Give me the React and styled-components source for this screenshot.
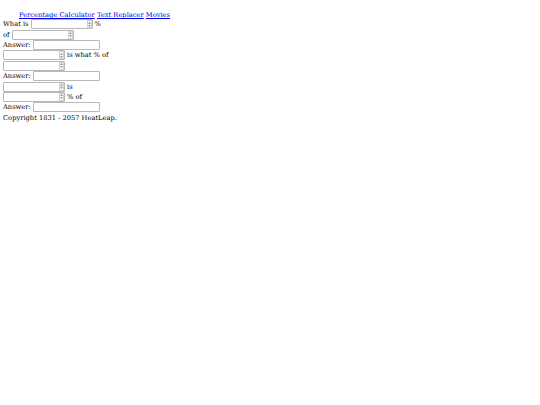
import React from 'react'
import styled, { createGlobalStyle } from 'styled-components'

const GlobalStyle = createGlobalStyle`
  body {
    margin: 5px 3px;
    font-family: "DejaVu Serif", serif;
    font-size: 6.7px;
    color: #000;
    background: #fff;
  }
`

const Nav = styled.nav`
  padding: 6px 0 0 16px;
  line-height: 8px;
  a {
    color: #0000ee;
    text-decoration: underline;
  }
`

const Row = styled.div`
  display: flex;
  align-items: center;
  gap: 2px;
  height: 10.4px;
  white-space: nowrap;
`

const Field = styled.span`
  position: relative;
  display: inline-flex;
`

const Input = styled.input`
  box-sizing: border-box;
  width: ${p => p.$w}px;
  height: 10px;
  margin: 0;
  padding: 0 1px;
  font-size: 6px;
  border: 1px solid #b8b8b8;
  border-radius: 1px;
  background: #fff;
  appearance: textfield;
  &::-webkit-inner-spin-button,
  &::-webkit-outer-spin-button {
    -webkit-appearance: none;
    margin: 0;
  }
`

const Spinner = styled.span`
  position: absolute;
  right: 1px;
  top: 1px;
  bottom: 1px;
  width: 5px;
  box-sizing: border-box;
  border: 1px solid #d4d4d4;
  background: #f7f7f7;
  display: flex;
  flex-direction: column;
  align-items: center;
  justify-content: space-around;
  pointer-events: none;
`

function NumField() {
  return (
    <Field>
      <Input type="number" $w={62} />
      <Spinner>
        <svg width="3" height="2" viewBox="0 0 3 2"><path d="M0 2 L1.5 0 L3 2Z" fill="#999" /></svg>
        <svg width="3" height="2" viewBox="0 0 3 2"><path d="M0 0 L1.5 2 L3 0Z" fill="#999" /></svg>
      </Spinner>
    </Field>
  )
}

const TextField = () => <Input type="text" $w={67} />

const Footer = styled.div`
  line-height: 10px;
`

export default function App() {
  return (
    <>
      <GlobalStyle />
      <Nav>
        <a href="#">Percentage Calculator</a> <a href="#">Text Replacer</a> <a href="#">Movies</a>
      </Nav>
      <Row>What is <NumField /> %</Row>
      <Row>of <NumField /></Row>
      <Row>Answer: <TextField /></Row>
      <Row><NumField /> is what % of</Row>
      <Row><NumField /></Row>
      <Row>Answer: <TextField /></Row>
      <Row><NumField /> is</Row>
      <Row><NumField /> % of</Row>
      <Row>Answer: <TextField /></Row>
      <Footer>Copyright 1831 - 2057 HeatLeap.</Footer>
    </>
  )
}
